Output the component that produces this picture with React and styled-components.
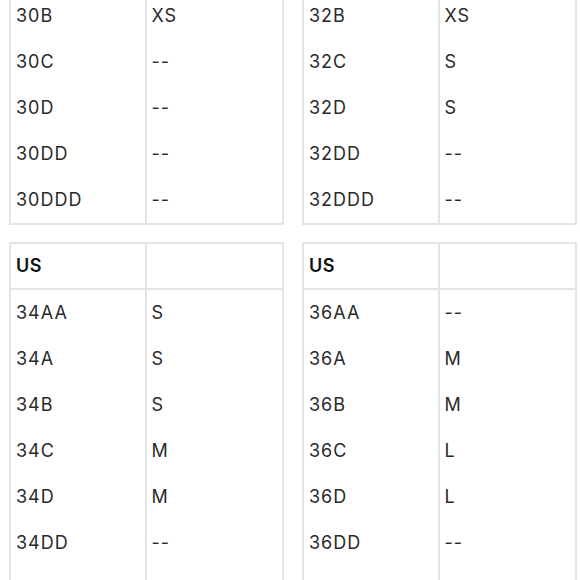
import styled, { createGlobalStyle } from 'styled-components';

const GlobalStyle = createGlobalStyle`
	html, body {
		margin: 0;
		padding: 0;
		background: #fff;
		overflow: hidden;
	}
	body {
		font-family: Inter, 'Noto Sans', sans-serif;
		color: #222;
	}
`;

const Page = styled.div`
	padding: 0 3px 0 9px;
	margin-top: -147px;
	display: grid;
	grid-template-columns: 1fr 1fr;
	column-gap: 18px;
	row-gap: 17px;
`;

const SizeTable = styled.table`
	width: 100%;
	border-collapse: separate;
	border-spacing: 0;
	border: 2px solid #e4e4e4;
	table-layout: fixed;
`;

const Cell = styled.td`
	height: 46px;
	padding: 0 5px 2px;
	font-size: 18px;
	letter-spacing: 1px;
	font-weight: 400;
	color: #2a2a2a;
	border-right: 2px solid #e4e4e4;
	box-sizing: border-box;
	vertical-align: middle;
	&:last-child {
		border-right: none;
	}
`;

const HeadCell = styled(Cell).attrs({ as: 'th' })`
	height: 46px;
	text-align: left;
	font-weight: 600;
	letter-spacing: 0.6px;
	color: #111;
	border-bottom: 2px solid #e4e4e4;
`;

const tables = [
	{
		rows: [
			['30AA', 'XS'],
			['30A', 'XS'],
			['30B', 'XS'],
			['30C', '--'],
			['30D', '--'],
			['30DD', '--'],
			['30DDD', '--'],
		],
	},
	{
		rows: [
			['32AA', 'XS'],
			['32A', 'XS'],
			['32B', 'XS'],
			['32C', 'S'],
			['32D', 'S'],
			['32DD', '--'],
			['32DDD', '--'],
		],
	},
	{
		rows: [
			['34AA', 'S'],
			['34A', 'S'],
			['34B', 'S'],
			['34C', 'M'],
			['34D', 'M'],
			['34DD', '--'],
			['34DDD', '--'],
		],
	},
	{
		rows: [
			['36AA', '--'],
			['36A', 'M'],
			['36B', 'M'],
			['36C', 'L'],
			['36D', 'L'],
			['36DD', '--'],
			['36DDD', '--'],
		],
	},
];

const Chart = ({ rows }) => (
	<SizeTable>
		<thead>
			<tr>
				<HeadCell>US</HeadCell>
				<HeadCell></HeadCell>
			</tr>
		</thead>
		<tbody>
			{rows.map(([band, size]) => (
				<tr key={band}>
					<Cell>{band}</Cell>
					<Cell>{size}</Cell>
				</tr>
			))}
		</tbody>
	</SizeTable>
);

export default function App() {
	return (
		<>
			<GlobalStyle />
			<Page>
				{tables.map((t, i) => (
					<Chart key={i} rows={t.rows} />
				))}
			</Page>
		</>
	);
}
